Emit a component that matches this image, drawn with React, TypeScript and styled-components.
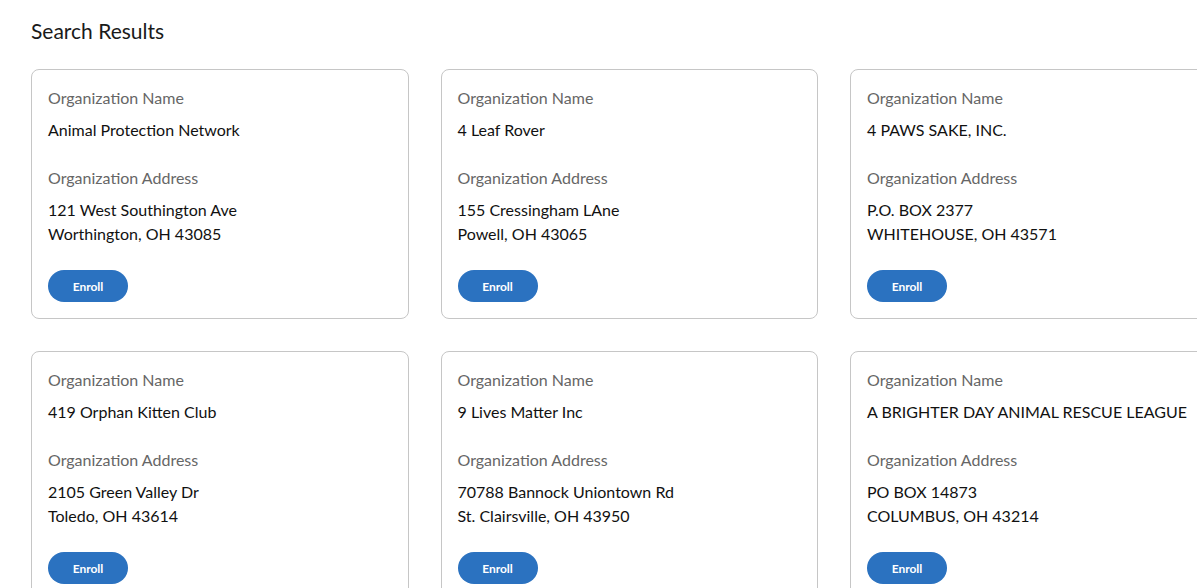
import React from "react";
import styled, { createGlobalStyle } from "styled-components";

interface Organization {
  name: string;
  street: string;
  city: string;
}

const organizations: Organization[] = [
  { name: "Animal Protection Network", street: "121 West Southington Ave", city: "Worthington, OH 43085" },
  { name: "4 Leaf Rover", street: "155 Cressingham LAne", city: "Powell, OH 43065" },
  { name: "4 PAWS SAKE, INC.", street: "P.O. BOX 2377", city: "WHITEHOUSE, OH 43571" },
  { name: "419 Orphan Kitten Club", street: "2105 Green Valley Dr", city: "Toledo, OH 43614" },
  { name: "9 Lives Matter Inc", street: "70788 Bannock Uniontown Rd", city: "St. Clairsville, OH 43950" },
  { name: "A BRIGHTER DAY ANIMAL RESCUE LEAGUE", street: "PO BOX 14873", city: "COLUMBUS, OH 43214" },
];

const GlobalStyle = createGlobalStyle`
  body {
    margin: 0;
    background: #ffffff;
    font-family: Lato, "Open Sans", sans-serif;
    color: #1a1a1a;
  }
`;

const Page = styled.div`
  padding: 15px 0 0 31px;
  height: 100vh;
  box-sizing: border-box;
  overflow: hidden;
`;

const Title = styled.h2`
  margin: 0 0 22px;
  font-size: 21px;
  font-weight: 400;
  line-height: 32px;
  color: #1a1a1a;
`;

const Grid = styled.div`
  display: grid;
  grid-template-columns: repeat(3, 377.5px);
  gap: 32px;
`;

const Card = styled.div`
  border: 1px solid #c6c6c6;
  border-radius: 8px;
  padding: 16px;
  display: flex;
  flex-direction: column;
`;

const Label = styled.div`
  font-size: 16px;
  line-height: 24px;
  color: #666666;
`;

const Value = styled.div<{ $gapAfter?: boolean }>`
  margin-top: 8px;
  font-size: 16px;
  line-height: 24px;
  color: #111111;
  margin-bottom: ${(p) => (p.$gapAfter ? "24px" : "0")};
`;

const EnrollButton = styled.button`
  margin-top: 24px;
  width: 80px;
  height: 32px;
  border: none;
  border-radius: 16px;
  background: #2b72c0;
  color: #ffffff;
  font-family: Lato, "Open Sans", sans-serif;
  font-size: 12px;
  font-weight: 700;
  cursor: pointer;
`;

function OrgCard({ org }: { org: Organization }) {
  return (
    <Card>
      <Label>Organization Name</Label>
      <Value $gapAfter>{org.name}</Value>
      <Label>Organization Address</Label>
      <Value>
        {org.street}
        <br />
        {org.city}
      </Value>
      <div>
        <EnrollButton>Enroll</EnrollButton>
      </div>
    </Card>
  );
}

export default function App() {
  return (
    <>
      <GlobalStyle />
      <Page>
        <Title>Search Results</Title>
        <Grid>
          {organizations.map((org) => (
            <OrgCard key={org.name} org={org} />
          ))}
        </Grid>
      </Page>
    </>
  );
}
